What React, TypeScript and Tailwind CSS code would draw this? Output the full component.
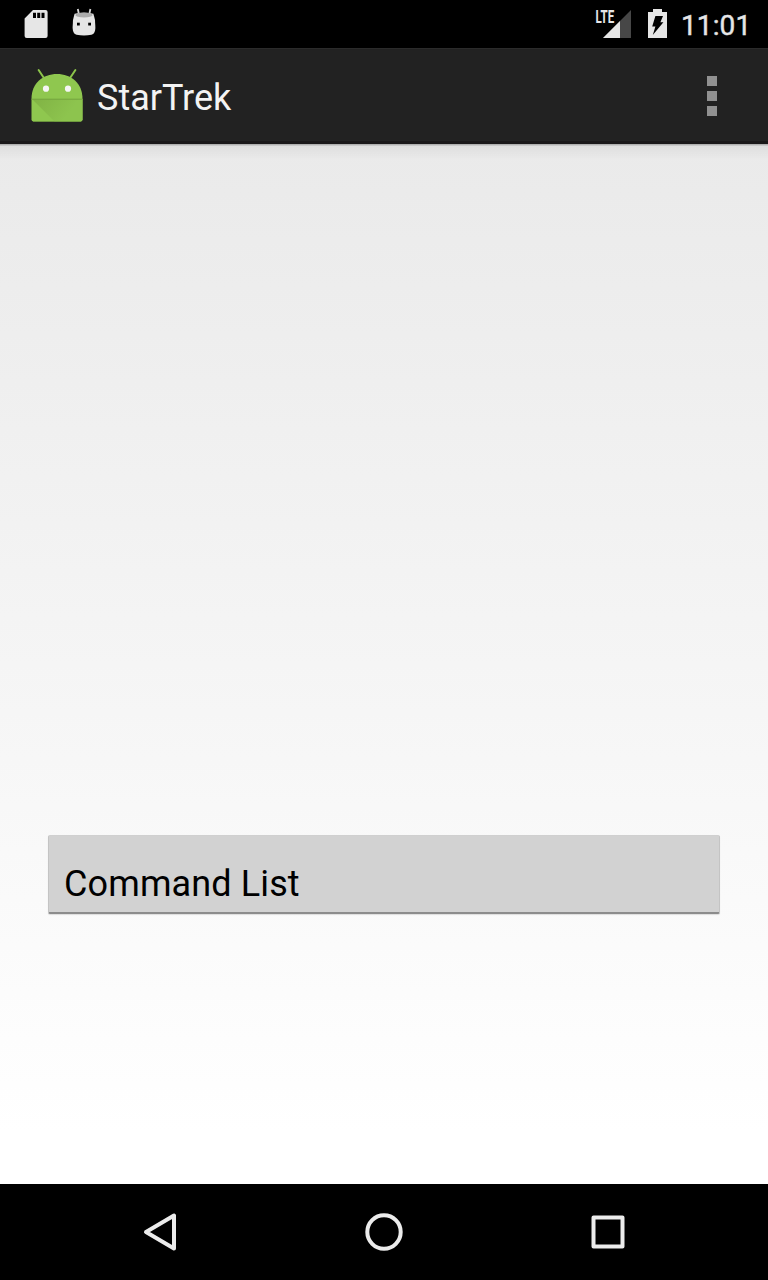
function StatusBar() {
  return (
    <header className="flex h-12 shrink-0 items-start justify-between bg-black">
      <svg width="110" height="48" viewBox="0 0 110 48" aria-hidden="true">
        <path
          fill="#e6e6e6"
          fillRule="evenodd"
          d="M33 10H45.5Q47.6 10 47.6 12.1V36Q47.6 38 45.5 38H26.7Q24.6 38 24.6 36V18.4ZM33 12.7V18H36V12.7ZM37.2 12.7V18H40.2V12.7ZM41.5 12.7V18H44.5V12.7Z"
        />
        <path d="M77.8 9L78.9 14M90.4 9L89.3 14" stroke="#d8d8d8" strokeWidth="1.8" />
        <path
          fill="#e6e6e6"
          d="M74.6 13.8Q84 11.6 93.4 13.8Q95.8 20 95.4 28Q95 34 91.5 34.8Q84 36.2 76.5 34.8Q73 34 72.6 28Q72.2 20 74.6 13.8Z"
        />
        <ellipse cx="84" cy="15" rx="8.6" ry="2.4" fill="#acacac" />
        <rect x="77" y="22.7" width="2.8" height="2.8" fill="#000" />
        <rect x="88.2" y="22.7" width="2.8" height="2.8" fill="#000" />
      </svg>
      <div className="flex h-12">
        <svg width="86" height="48" viewBox="590 0 86 48" aria-hidden="true">
          <path d="M631 10V38H603Z" fill="#474747" />
          <path d="M620 21V38H603Z" fill="#e6e6e6" />
          <text
            x="595.6"
            y="22.6"
            textLength="18.6"
            lengthAdjust="spacingAndGlyphs"
            fill="#e6e6e6"
            fontSize="17.5"
            fontWeight="700"
            fontFamily="Roboto, sans-serif"
          >
            LTE
          </text>
          <path d="M653 9H662V12H667V38H648V12H653Z" fill="#e6e6e6" />
          <path d="M655.4 16H663L660.4 22.3H663.4L652.8 35L655.4 26.6H652.2Z" fill="#000" />
        </svg>
        <span className="w-[92px] pl-[5px] pt-[10px] font-[Roboto,sans-serif] text-[28px] leading-[32px] tracking-[0.1px] text-[#e6e6e6] [-webkit-text-stroke:0.4px_#e6e6e6]">
          11:01
        </span>
      </div>
    </header>
  );
}

function LauncherIcon() {
  return (
    <svg width="64" height="64" viewBox="25 64 64 64" className="shrink-0" aria-hidden="true">
      <defs>
        <linearGradient id="body-shade" x1="32" y1="99" x2="62" y2="122" gradientUnits="userSpaceOnUse">
          <stop offset="0" stopColor="#80b244" />
          <stop offset="1" stopColor="#8dc44e" />
        </linearGradient>
      </defs>
      <path d="M38.6 70L43.6 77.5M75.4 70L70.4 77.5" stroke="#8bc34a" strokeWidth="2" strokeLinecap="round" />
      <path d="M31.5 99C31.5 83 43 74 57 74S82.5 83 82.5 99V119.5Q82.5 121.5 80.5 121.5H33.5Q31.5 121.5 31.5 119.5Z" fill="#8fc74f" />
      <path d="M32 99L54.5 121.5H80.5Q82.5 121.5 82.5 119.5V99Z" fill="url(#body-shade)" />
      <path d="M31.5 99.2H82.5" stroke="#75a43f" strokeWidth="1" />
      <path d="M33 121.5H81" stroke="#6f9b3d" strokeWidth=".8" />
      <circle cx="46" cy="88.7" r="3.1" fill="#f5f5f5" />
      <circle cx="68" cy="88.7" r="3.1" fill="#f5f5f5" />
    </svg>
  );
}

function ActionBar() {
  return (
    <div className="flex h-24 shrink-0 items-start border-b-[3px] border-t border-b-[#1a1819] border-t-[#2b2b2b] bg-[#222222] pl-[25px]">
      <div className="pt-[15px]">
        <LauncherIcon />
      </div>
      <h1 className="ml-[8px] mt-[28px] font-[Roboto,sans-serif] text-[36px] font-normal leading-[42px] text-[#f3f3f3]">
        StarTrek
      </h1>
      <button aria-label="More options" className="ml-auto mr-[51px] mt-[27px] flex flex-col gap-[5px]">
        <span className="size-[10px] bg-[#919191]" />
        <span className="size-[10px] bg-[#919191]" />
        <span className="size-[10px] bg-[#919191]" />
      </button>
    </div>
  );
}

function NavigationBar() {
  return (
    <nav className="flex h-24 shrink-0 items-center justify-center gap-32 bg-black">
      <svg width="96" height="96" viewBox="112 1184 96 96" fill="none" stroke="#ececec" strokeWidth="4" strokeLinejoin="round">
        <path d="M174 1215.5V1248.5L146 1232Z" />
      </svg>
      <svg width="96" height="96" viewBox="336 1184 96 96" fill="none" stroke="#ececec" strokeWidth="4">
        <circle cx="384" cy="1232" r="16.7" />
      </svg>
      <svg width="96" height="96" viewBox="560 1184 96 96" fill="none" stroke="#ececec" strokeWidth="4" strokeLinejoin="round">
        <path d="M593.5 1217.5H622.5V1246.5H593.5Z" />
      </svg>
    </nav>
  );
}

export default function App() {
  return (
    <div className="flex h-[1280px] w-[768px] flex-col overflow-hidden bg-black">
      <StatusBar />
      <ActionBar />
      <main className="flex-1 bg-linear-to-b from-[#eaeaea] via-[#f5f5f5] via-50% to-white to-95%">
        <div className="h-[16px] bg-linear-to-b from-black/30 via-black/5 via-15% to-transparent" />
        <div className="px-12 pt-[675px]">
          <button className="flex h-[79px] w-full items-start rounded-[2px] border-x border-b-2 border-t border-b-[#8c8c8c] border-l-[#c4c4c4] border-r-[#c4c4c4] border-t-[#d0d0d0] bg-[#d2d2d2] pl-[15px] pt-[27px] text-left font-[Roboto,sans-serif] text-[36px] leading-[42px] tracking-[0.12px] text-black shadow-[0_1px_1px_rgba(0,0,0,0.12)]">
            Command List
          </button>
        </div>
      </main>
      <NavigationBar />
    </div>
  );
}
